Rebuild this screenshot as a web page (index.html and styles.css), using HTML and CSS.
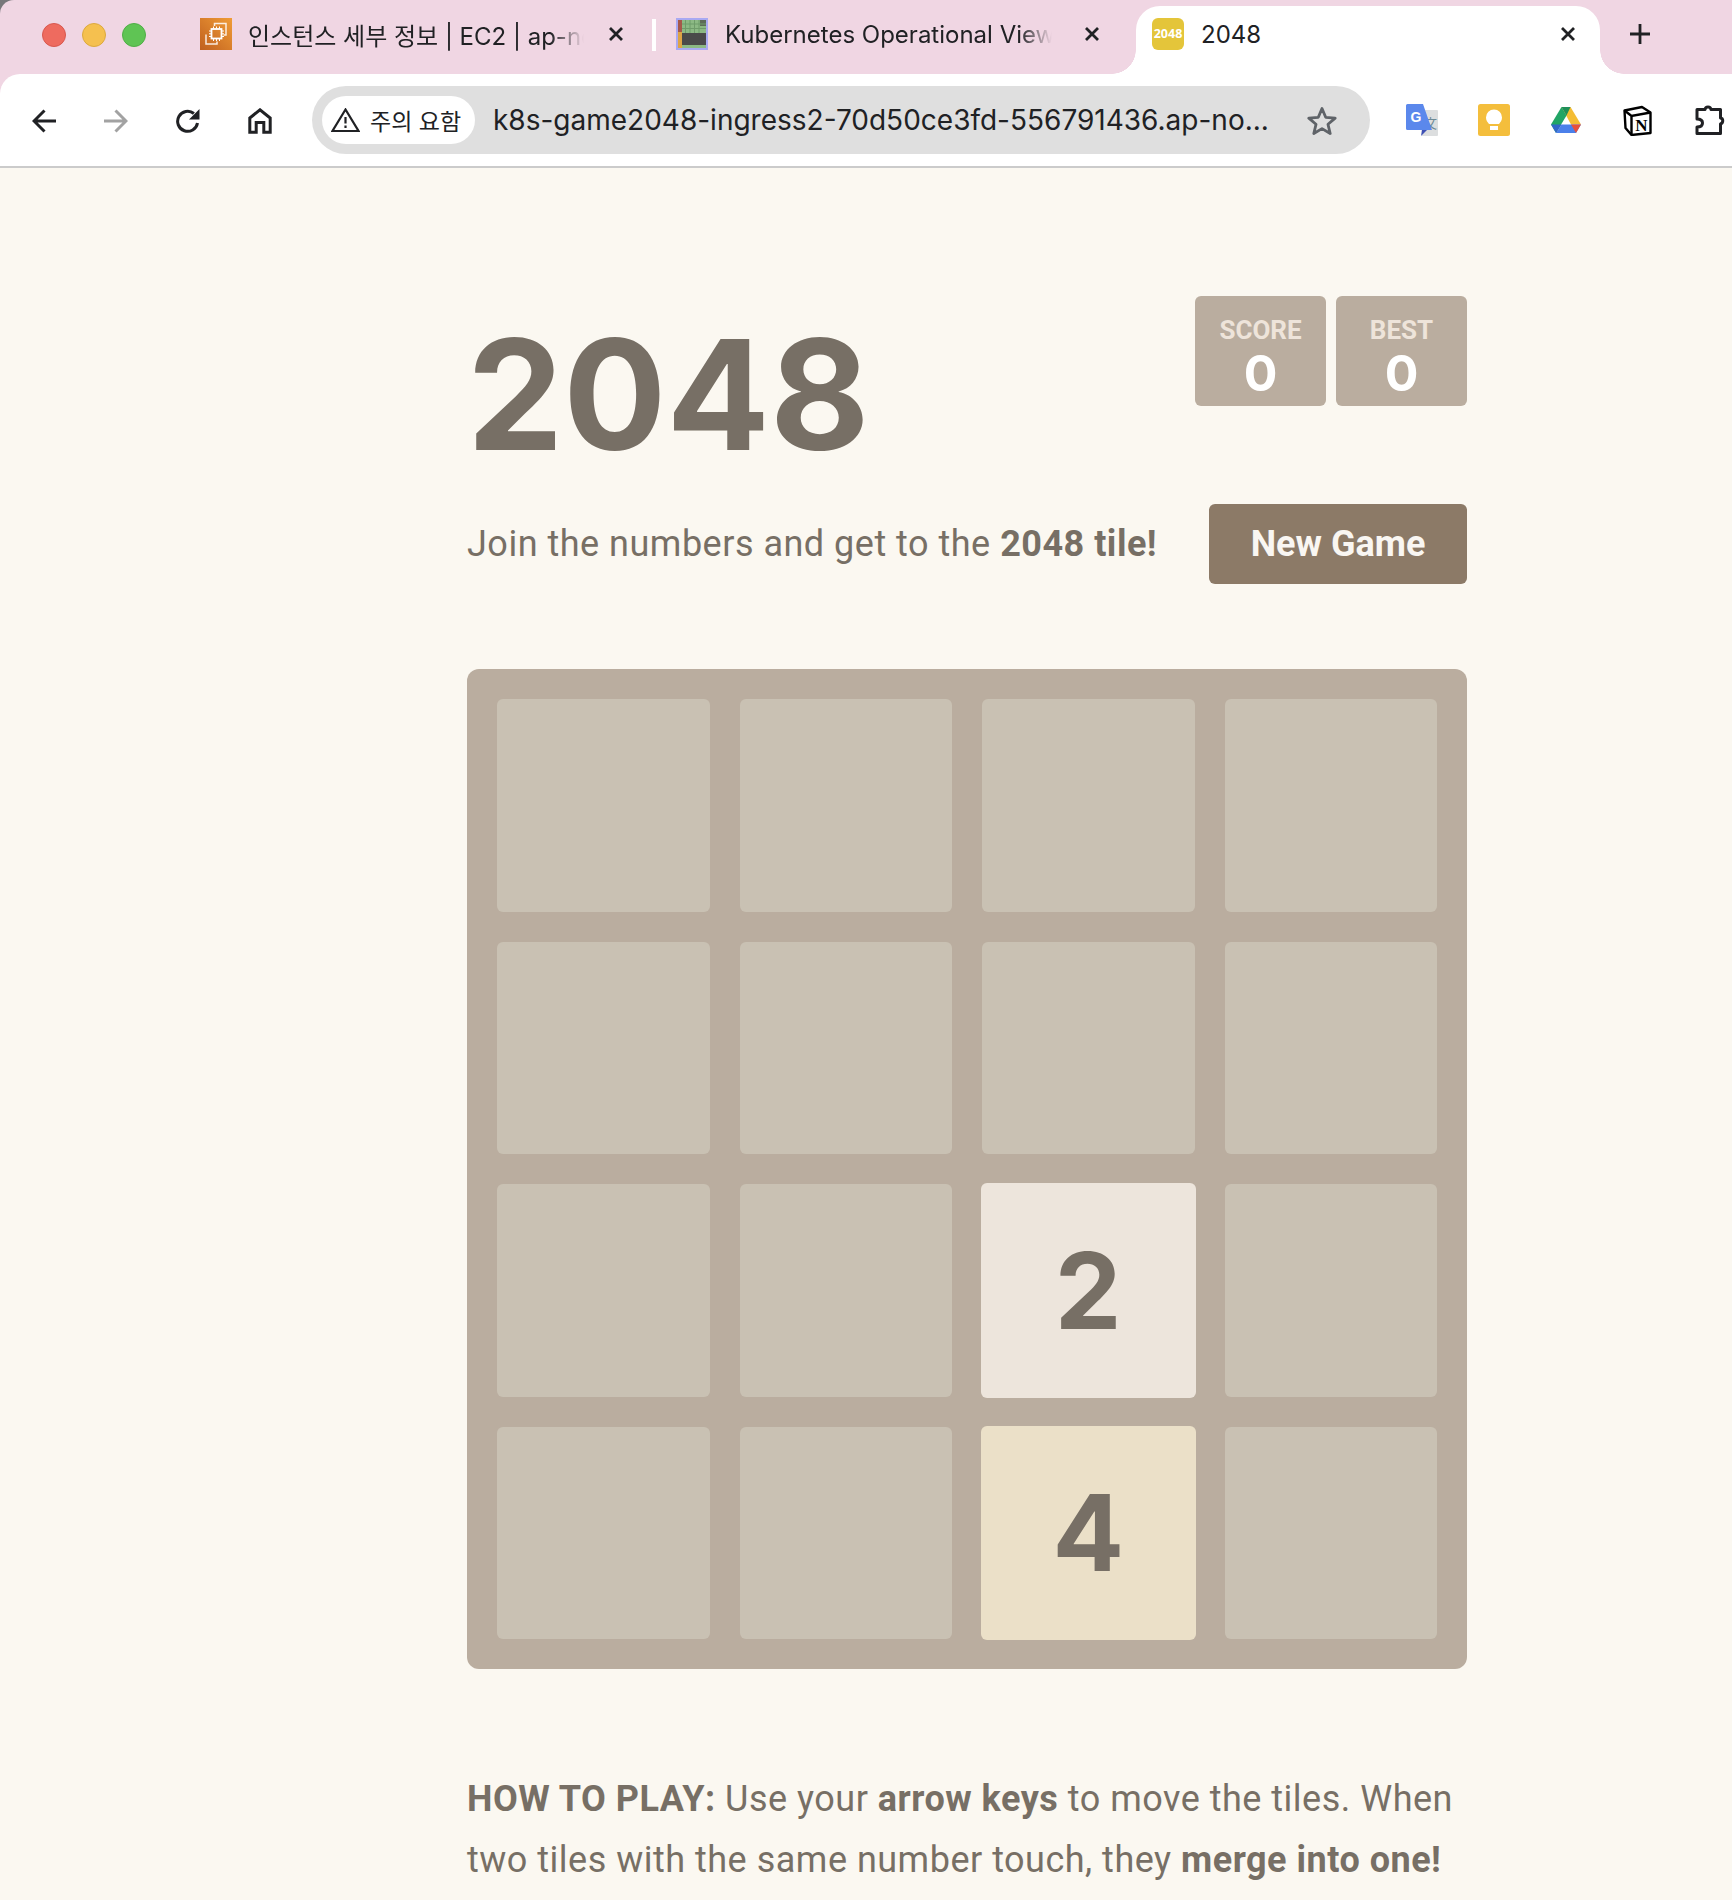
FILE: index.html
```html
<!DOCTYPE html>
<html lang="ko">
<head>
<meta charset="utf-8">
<title>2048</title>
<link rel="stylesheet" href="styles.css">
</head>
<body>
<header class="chrome">
  <div class="tabstrip">
    <div class="lights">
      <span class="light red"></span><span class="light yellow"></span><span class="light green"></span>
    </div>
    <div class="tab tab-one">
      <svg class="favicon" viewBox="0 0 32 32"><defs><linearGradient id="ec2" x1="0" y1="1" x2="1" y2="0"><stop offset="0" stop-color="#c0601f"/><stop offset="1" stop-color="#f09c36"/></linearGradient></defs><rect width="32" height="32" fill="url(#ec2)"/><path d="M14.500 8V5.500H26V17h-2.500M6 16.500V26h11v-2.500" fill="none" stroke="#fff" stroke-width="1.500" opacity=".85"/><rect x="11.500" y="11" width="10" height="9.500" fill="none" stroke="#fff" stroke-width="1.800"/><path d="M13.500 8.500v2M16.500 8.500v2M19.500 8.500v2M13.500 21v2M16.500 21v2M19.500 21v2M9 13h2M9 15.800h2M9 18.500h2M22 13h2M22 15.800h2M22 18.500h2" stroke="#fff" stroke-width="1"/></svg>
      <span class="tab-title">인스턴스 세부 정보 | EC2 | ap-no</span>
      <svg class="close" viewBox="0 0 16 16"><path d="M2 2l12 12M14 2L2 14"/></svg>
    </div>
    <span class="tab-sep"></span>
    <div class="tab tab-two">
      <svg class="favicon" viewBox="0 0 32 32"><rect x="1" y="1" width="30" height="30" fill="#4a4a4a" stroke="#a9a9f2" stroke-width="2"/><rect x="6" y="2" width="24" height="13" fill="#8cb984"/><rect x="24" y="2" width="6" height="6" fill="#5d6b58"/><rect x="6" y="27" width="24" height="3" fill="#8cb984"/><path d="M9.500 2v13M14 2v13M18.500 2v13M23 2v13M6 6h24M6 10.500h24" stroke="#6f9c6a" stroke-width="1"/><rect x="2" y="2" width="4" height="12" fill="#a5584a"/><rect x="2" y="14" width="4" height="16" fill="#dda445"/></svg>
      <span class="tab-title">Kubernetes Operational View</span>
      <svg class="close" viewBox="0 0 16 16"><path d="M2 2l12 12M14 2L2 14"/></svg>
    </div>
    <div class="tab tab-active">
      <span class="favicon-2048">2048</span>
      <span class="tab-name">2048</span>
      <svg class="close" viewBox="0 0 16 16"><path d="M2 2l12 12M14 2L2 14"/></svg>
    </div>
    <svg class="newtab" viewBox="0 0 20 20"><path d="M10 0v20M0 10h20"/></svg>
  </div>
  <div class="toolbar">
    <div class="nav">
      <svg class="nav-icon" viewBox="0 0 24 24"><path d="M24 12H2.500M12.500 1.500L2 12l10.500 10.500"/></svg>
      <svg class="nav-icon dim" viewBox="0 0 24 24"><path d="M0 12h21.500M11.500 1.500L22 12 11.500 22.500"/></svg>
      <svg class="nav-icon" viewBox="0 0 24 24"><path d="M21.500 14a10 10 0 1 1-3.600-9.500"/><path class="solid" d="M23.500 0v10.500H13z"/></svg>
      <svg class="nav-icon" viewBox="0 0 24 26"><path d="M1.800 24.300V10L12 1.800 22.200 10v14.300h-6.400V14.500H8.200v9.800z"/></svg>
    </div>
    <div class="omnibox">
      <div class="chip">
        <svg class="warn" viewBox="0 0 29 24"><path d="M14.500 1.500L1.500 23h26z"/><path d="M14.500 9v6.500M14.500 17.500v2.500"/></svg>
        <span>주의 요함</span>
      </div>
      <span class="url">k8s-game2048-ingress2-70d50ce3fd-556791436.ap-no...</span>
      <svg class="star" viewBox="0 0 30 29"><path d="M15 2.500l3.700 8.800 9.500.8-7.200 6.200 2.200 9.200-8.200-4.900-8.200 4.900 2.200-9.200-7.200-6.200 9.500-.8z"/></svg>
    </div>
    <div class="exts">
      <svg class="ext" viewBox="0 0 32 32"><path d="M14 6h17a1 1 0 0 1 1 1v24a1 1 0 0 1-1 1H16z" fill="#dcdedf"/><text class="gt-zh" x="18" y="24">文</text><path d="M16 26h5l-6 6z" fill="#3f51b5"/><path d="M0 1.500A1.500 1.500 0 0 1 1.500 0H17l9 26H1.500A1.500 1.500 0 0 1 0 24.500z" fill="#5b88ec"/><text class="gt-g" x="4.500" y="18">G</text></svg>
      <svg class="ext" viewBox="0 0 32 32"><rect width="32" height="32" rx="2.500" fill="#f4be3c"/><path d="M8 13.500a8 8 0 0 1 16 0c0 3-1.500 4.500-3 6.500h-10c-1.500-2-3-3.500-3-6.500z" fill="#fff"/><rect x="12" y="22" width="8" height="4" fill="#fff"/></svg>
      <svg class="ext" viewBox="0 0 32 32"><path d="M11.500 3h9L31 20.500H21z" fill="#f4bd34"/><path d="M11.500 3l5 8.500L6 29 1 20.500z" fill="#22a565"/><path d="M6 29l5.500-8.500H31L26 29z" fill="#4b80ea"/><path d="M1 20.500L6 29l5.500-8.500z" fill="#3266c9"/><path d="M31 20.500L26 29l-5-8.500z" fill="#e8503a"/><path d="M11.500 3h9l-4 8.500z" fill="#1f8f58"/></svg>
      <svg class="ext" viewBox="0 0 32 32"><path d="M2.500 6.500L20 3l8.500 5.500V29L9.500 31l-6-7z" fill="#fff" stroke="#000" stroke-width="2.400" stroke-linejoin="round"/><path d="M2.500 6.500l7 5.500 19-3.500M9.500 12v19" fill="none" stroke="#000" stroke-width="2.400"/><text class="notion-n" x="19.300" y="27">N</text></svg>
      <svg class="ext" viewBox="0 0 32 32"><path d="M3 5.500h8c.5-3.500 5.500-3.500 6 0h9.500V14c3 .5 3 5 0 6v9.500H3V23c4 0 5.500-2 5.500-4S7 15 3 15z" fill="none" stroke="#202124" stroke-width="3" stroke-linejoin="round"/></svg>
    </div>
  </div>
</header>
<main class="page">
  <div class="container">
    <div class="heading">
      <h1 class="title">2048</h1>
      <div class="scores">
        <div class="score"><span class="score-label">SCORE</span><span class="score-value">0</span></div>
        <div class="score"><span class="score-label">BEST</span><span class="score-value">0</span></div>
      </div>
    </div>
    <div class="above-game">
      <p class="intro">Join the numbers and get to the <strong>2048 tile!</strong></p>
      <a class="new-game">New Game</a>
    </div>
    <div class="board">
      <div class="cell"></div><div class="cell"></div><div class="cell"></div><div class="cell"></div>
      <div class="cell"></div><div class="cell"></div><div class="cell"></div><div class="cell"></div>
      <div class="cell"></div><div class="cell"></div><div class="cell tile tile-2">2</div><div class="cell"></div>
      <div class="cell"></div><div class="cell"></div><div class="cell tile tile-4">4</div><div class="cell"></div>
    </div>
    <p class="explain"><strong>HOW TO PLAY:</strong> Use your <strong>arrow keys</strong> to move the tiles. When<br>two tiles with the same number touch, they <strong>merge into one!</strong></p>
  </div>
</main>
</body>
</html>
```
FILE: styles.css
```css
* { box-sizing: border-box; }
html, body { margin: 0; padding: 0; }
body {
  width: 1732px;
  height: 1900px;
  overflow: hidden;
  background: #fbf8f1;
  font-family: Roboto, "Noto Sans CJK KR", sans-serif;
  color: #776f65;
}
.chrome {
  height: 168px;
  background: #f0d6e3;
  border-top-left-radius: 14px;
  box-shadow: -6px -6px 0 0 #77777a;
}
.tabstrip {
  height: 74px;
  display: flex;
  align-items: flex-start;
  position: relative;
}
.lights {
  display: flex;
  gap: 16px;
  padding: 23px 0 0 42px;
  width: 192px;
  flex: none;
}
.light { width: 24px; height: 24px; border-radius: 50%; }
.red { background: #ee6b5f; border: 1px solid #d8584e; }
.yellow { background: #f5c04f; border: 1px solid #dca93e; }
.green { background: #5fc454; border: 1px solid #4fae46; }
.tab {
  display: flex;
  align-items: center;
  height: 68px;
  padding-bottom: 12px;
  margin-top: 6px;
  flex: none;
  font-family: Inter, "Noto Sans CJK KR", sans-serif;
  font-size: 24px;
  color: #202124;
}
.tab-one { width: 460px; padding-left: 8px; }
.tab-two { width: 480px; padding-left: 20px; }
.tab-sep { width: 4px; height: 32px; background: #fff; margin-top: 19px; flex: none; }
.favicon { width: 32px; height: 32px; flex: none; }
.tab-title {
  flex: none;
  overflow: hidden;
  white-space: nowrap;
  -webkit-mask-image: linear-gradient(to right, #000 90%, transparent);
  mask-image: linear-gradient(to right, #000 90%, transparent);
}
.tab-one .tab-title { width: 336px; margin-left: 16px; }
.tab-two .tab-title { width: 327px; margin-left: 17px; }
.close { width: 16px; height: 16px; flex: none; margin-left: 24px; fill: none; stroke: #202124; stroke-width: 2.800; }
.tab-two .close { margin-left: 32px; }
.tab-active {
  width: 464px;
  background: #fff;
  border-radius: 24px 24px 0 0;
  padding-left: 16px;
  position: relative;
}
.tab-active .close { margin-left: auto; margin-right: 24px; }
.tab-active::before, .tab-active::after {
  content: "";
  position: absolute;
  bottom: 0;
  width: 24px;
  height: 24px;
}
.tab-active::before { left: -24px; background: radial-gradient(circle at 0 0, #f0d6e3 23.500px, #fff 24px); }
.tab-active::after { right: -24px; background: radial-gradient(circle at 100% 0, #f0d6e3 23.500px, #fff 24px); }
.favicon-2048 {
  width: 32px;
  height: 32px;
  border-radius: 6px;
  background: #e4c53a;
  color: #fff;
  font: 700 12.500px/32px "Noto Sans", sans-serif;
  text-align: center;
  flex: none;
}
.tab-name { margin-left: 17px; }
.newtab { width: 20px; height: 20px; margin: 24px 0 0 30px; flex: none; fill: none; stroke: #202124; stroke-width: 2.800; }
.toolbar {
  height: 94px;
  background: #fff;
  border-bottom: 2px solid #cbcbcb;
  border-radius: 20px 0 0 0;
  display: flex;
  align-items: flex-start;
}
.nav { display: flex; gap: 48px; padding: 34px 0 0 32px; flex: none; width: 312px; }
.nav-icon { width: 24px; height: 26px; flex: none; fill: none; stroke: #202124; stroke-width: 3; }
.nav-icon.dim { stroke: #a2a2a2; }
.nav-icon .solid { fill: #202124; stroke: none; }
.omnibox {
  flex: none;
  width: 1058px;
  height: 68px;
  margin-top: 12px;
  background: #dfdfdf;
  border-radius: 34px;
  display: flex;
  align-items: center;
  padding: 0 33px 0 10px;
}
.chip {
  flex: none;
  width: 153px;
  height: 48px;
  background: #fff;
  border-radius: 24px;
  display: flex;
  align-items: center;
  gap: 10px;
  padding-left: 9px;
  font-family: Inter, "Noto Sans CJK KR", sans-serif;
  font-size: 23px;
  color: #202124;
  white-space: nowrap;
}
.warn { width: 29px; height: 24px; flex: none; fill: none; stroke: #202124; stroke-width: 2.200; }
.url { flex: 1; margin-left: 18px; font-family: Inter, "Noto Sans", sans-serif; font-size: 28px; color: #202124; white-space: nowrap; }
.star { width: 30px; height: 29px; flex: none; fill: none; stroke: #5f6368; stroke-width: 2.800; stroke-linejoin: round; }
.exts { display: flex; gap: 40px; padding: 30px 0 0 36px; flex: none; }
.ext { width: 32px; height: 32px; flex: none; }
.gt-g { font: 700 14px "Liberation Sans", sans-serif; fill: #fff; }
.gt-zh { font: 400 13px "Noto Sans CJK SC", sans-serif; fill: #6d8a96; }
.notion-n { font: 700 17px "Liberation Serif", serif; fill: #000; text-anchor: middle; }
.page { background: #fbf8f1; padding-top: 128px; height: 1732px; }
.container { width: 1000px; margin: 0 0 0 467px; }
.heading { display: flex; justify-content: space-between; align-items: flex-start; height: 208px; }
.title {
  margin: 0;
  padding-top: 22px;
  font-family: Inter, sans-serif;
  font-size: 153px;
  font-weight: 700;
  line-height: 1;
  color: #776f65;
}
.scores { display: flex; gap: 10px; }
.score {
  width: 131px;
  height: 110px;
  background: #baad9f;
  border-radius: 6px;
  display: flex;
  flex-direction: column;
  align-items: center;
  padding-top: 19px;
}
.score-label { font-size: 26px; font-weight: 700; line-height: 30px; color: #eee4da; }
.score-value { font-family: Inter, sans-serif; font-size: 50px; font-weight: 700; line-height: 44px; color: #fff; margin-top: 6px; }
.above-game { display: flex; justify-content: space-between; align-items: center; height: 80px; }
.intro { margin: 0; font-size: 36px; letter-spacing: .5px; white-space: nowrap; }
.new-game {
  width: 258px;
  height: 80px;
  background: #8c7a67;
  border-radius: 6px;
  color: #f9f6f2;
  font-size: 36px;
  font-weight: 700;
  display: flex;
  align-items: center;
  justify-content: center;
}
.board {
  margin-top: 85px;
  width: 1000px;
  height: 1000px;
  background: #baad9f;
  border-radius: 12px;
  padding: 30px;
  display: grid;
  grid-template-columns: repeat(4, 1fr);
  grid-template-rows: repeat(4, 1fr);
  gap: 30px;
}
.cell { background: #c9c1b3; border-radius: 6px; }
.tile {
  margin: -1px;
  display: flex;
  align-items: center;
  justify-content: center;
  font-family: Inter, sans-serif;
  font-size: 106px;
  font-weight: 700;
  color: #776f65;
}
.tile-2 { background: #ede5dc; }
.tile-4 { background: #ebe0c8; }
.explain { margin: 100px 0 0; font-size: 36px; line-height: 61px; letter-spacing: .5px; white-space: nowrap; }
```
